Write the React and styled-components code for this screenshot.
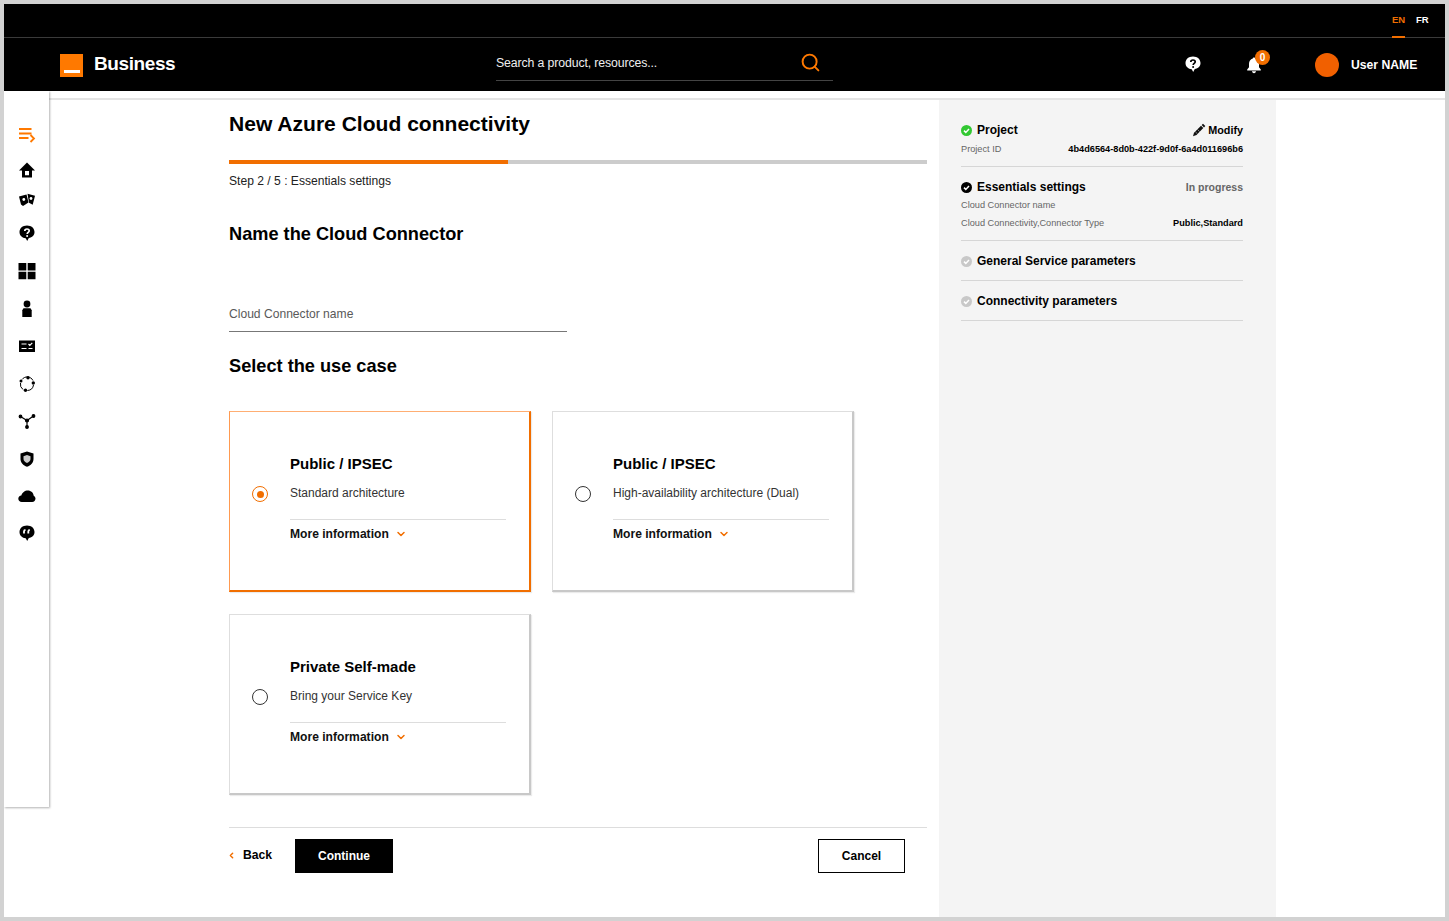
import React from "react";
import styled, { createGlobalStyle } from "styled-components";
import { ChevronDown, ChevronLeft, Search } from "lucide-react";

const orange = "#f16e00";

const GlobalStyle = createGlobalStyle`
  html, body {
    margin: 0;
    padding: 0;
    background: #fff;
  }
  body {
    font-family: "Liberation Sans", Arial, sans-serif;
    color: #000;
  }
  * {
    box-sizing: border-box;
  }
`;

const Frame = styled.div`
  width: 1449px;
  height: 921px;
  border: 4px solid #d2d2d2;
  overflow: hidden;
  background: #fff;
`;

const TopBar = styled.div`
  height: 34px;
  background: #000;
  border-bottom: 1px solid #3a3a3a;
  display: flex;
  justify-content: flex-end;
  gap: 11px;
  padding-right: 17px;
`;

const Lang = styled.span`
  height: 34px;
  padding-top: 10px;
  width: ${(p) => (p.$active ? "13px" : "12px")};
  font-size: 9.5px;
  font-weight: 700;
  color: ${(p) => (p.$active ? orange : "#fff")};
  border-bottom: ${(p) => (p.$active ? `2px solid ${orange}` : "none")};
`;

const Header = styled.header`
  height: 53px;
  background: #000;
  display: flex;
  align-items: center;
  padding-left: 56px;
`;

const LogoSquare = styled.div`
  width: 23px;
  height: 23px;
  background: #ff7900;
  display: flex;
  align-items: flex-end;
  justify-content: center;
  padding-bottom: 4px;
  margin-top: 1px;
  &::after {
    content: "";
    width: 16px;
    height: 3px;
    background: #fff;
  }
`;

const Brand = styled.span`
  margin-left: 11px;
  margin-top: -2px;
  width: 402px;
  color: #fff;
  font-size: 19px;
  font-weight: 700;
  letter-spacing: -0.4px;
`;

const SearchBox = styled.div`
  width: 337px;
  height: 34px;
  margin-top: -1px;
  padding: 0 12px 2px 0;
  border-bottom: 1px solid #444;
  display: flex;
  align-items: center;
  justify-content: space-between;
  color: #eee;
  font-size: 12.3px;
  letter-spacing: -0.12px;
`;

const HeaderIcon = styled.div`
  position: relative;
  display: flex;
  color: #fff;
  margin-left: ${(p) => p.$left}px;
  margin-top: ${(p) => p.$top}px;
`;

const Badge = styled.span`
  position: absolute;
  left: 10px;
  top: -6px;
  width: 15px;
  height: 15px;
  border-radius: 50%;
  background: ${orange};
  color: #fff;
  font-size: 10px;
  font-weight: 700;
  display: flex;
  align-items: center;
  justify-content: center;
`;

const Avatar = styled.div`
  width: 24px;
  height: 24px;
  margin-left: 52px;
  border-radius: 50%;
  background: #f16000;
`;

const UserName = styled.span`
  margin-left: 12px;
  margin-top: 1px;
  color: #fff;
  font-size: 12.2px;
  font-weight: 700;
`;

const Body = styled.div`
  display: flex;
  align-items: flex-start;
  height: 826px;
`;

const Sidebar = styled.nav`
  width: 45px;
  height: 716px;
  flex: none;
  background: #fff;
  box-shadow: 1px 1px 2px rgba(0, 0, 0, 0.3);
  position: relative;
`;

const SideItem = styled.div`
  position: absolute;
  left: 14px;
  top: ${(p) => p.$y - 91 - 9}px;
  width: 18px;
  height: 18px;
  color: ${(p) => (p.$active ? "#ff7900" : "#000")};
`;

const Content = styled.div`
  flex: 1;
  height: 826px;
  margin-top: 7px;
  border-top: 2px solid #e4e4e4;
  display: flex;
  padding-left: 180px;
`;

const Main = styled.main`
  width: 698px;
  flex: none;
`;

const Title = styled.h1`
  margin: 11px 0 0;
  font-size: 21.05px;
  line-height: 25px;
  font-weight: 700;
`;

const Progress = styled.div`
  margin-top: 24px;
  height: 4px;
  background: #ccc;
`;

const ProgressFill = styled.div`
  height: 100%;
  background: ${orange};
`;

const StepText = styled.p`
  margin: 9px 0 0;
  font-size: 12.1px;
  line-height: 16px;
  color: #222;
`;

const SectionTitle = styled.h2`
  margin: ${(p) => p.$top}px 0 0;
  font-size: 18.2px;
  line-height: 22px;
  font-weight: 700;
`;

const NameField = styled.div`
  margin-top: 60px;
  width: 338px;
  height: 27px;
  border-bottom: 1px solid #777;
  font-size: 12.1px;
  line-height: 18px;
  color: #595959;
`;

const CardGrid = styled.div`
  margin-top: 34px;
  display: grid;
  grid-template-columns: 302px 302px;
  grid-template-rows: 181px 181px;
  column-gap: 21px;
  row-gap: 22px;
`;

const Card = styled.label`
  display: grid;
  grid-template-columns: 60px 1fr;
  grid-template-rows: 22px 44px 1fr;
  padding: 41px 23px 0 0;
  background: #fff;
  border-style: solid;
  border-width: 1px 2px 2px 1px;
  border-color: ${(p) =>
    p.$selected
      ? `#ffae73 ${orange} ${orange} #ff9a50`
      : "#dedede #c8c8c8 #c8c8c8 #dedede"};
  box-shadow: 1px 1px 1px rgba(0, 0, 0, 0.08);
`;

const CardTitle = styled.div`
  grid-column: 2;
  font-size: 15px;
  line-height: 22px;
  font-weight: 700;
`;

const Radio = styled.span`
  grid-column: 1;
  grid-row: 2;
  justify-self: center;
  align-self: start;
  margin-top: 11px;
  width: 16px;
  height: 16px;
  border-radius: 50%;
  border: ${(p) => (p.$checked ? `1.5px solid ${orange}` : "1px solid #333")};
  display: flex;
  align-items: center;
  justify-content: center;
  &::after {
    content: "";
    display: ${(p) => (p.$checked ? "block" : "none")};
    width: 7px;
    height: 7px;
    border-radius: 50%;
    background: ${orange};
  }
`;

const CardText = styled.div`
  grid-column: 2;
  grid-row: 2;
  font-size: 12px;
  line-height: 16px;
  padding-top: 10px;
  color: #333;
`;

const MoreLink = styled.div`
  grid-column: 2;
  grid-row: 3;
  border-top: 1px solid #ddd;
  padding-top: 7px;
  height: 30px;
  display: flex;
  align-items: flex-start;
  gap: 6px;
  font-size: 12.1px;
  line-height: 15px;
  font-weight: 700;
  color: #111;
`;

const Footer = styled.div`
  margin-top: 32px;
  border-top: 1px solid #ddd;
  padding-top: 11px;
  display: flex;
  align-items: center;
`;

const BackLink = styled.span`
  display: flex;
  align-items: center;
  gap: 7px;
  font-size: 12.2px;
  font-weight: 700;
  width: 68px;
  margin-left: -2px;
  margin-top: -2px;
`;

const Button = styled.button`
  width: ${(p) => p.$width}px;
  height: 34px;
  margin-left: ${(p) => p.$left || 0}px;
  border: 1px solid #000;
  border-radius: 0;
  background: ${(p) => (p.$dark ? "#000" : "#fff")};
  color: ${(p) => (p.$dark ? "#fff" : "#000")};
  font-family: inherit;
  font-size: 12px;
  font-weight: 700;
`;

const Panel = styled.aside`
  width: 337px;
  margin-left: 12px;
  height: 820px;
  flex: none;
  background: #f4f4f4;
  padding: 20px 33px 0 22px;
`;

const PanelSection = styled.section`
  border-bottom: 1px solid #d6d6d6;
  height: ${(p) => p.$height}px;
  padding-top: ${(p) => p.$top || 0}px;
`;

const PanelRow = styled.div`
  display: flex;
  align-items: center;
  justify-content: space-between;
  height: ${(p) => p.$height || 18}px;
`;

const PanelHeading = styled.div`
  display: flex;
  align-items: center;
  gap: 5px;
  font-size: 12px;
  font-weight: 700;
  color: #000;
`;

const Muted = styled.span`
  font-size: 9.2px;
  color: #666;
`;

const Value = styled.span`
  font-size: 9.2px;
  font-weight: 700;
  color: #000;
`;

const Status = styled.span`
  font-size: 10.5px;
  font-weight: 700;
  color: #666;
`;

const ModifyLink = styled.span`
  display: flex;
  align-items: center;
  gap: 2px;
  font-size: 10.8px;
  font-weight: 700;
`;

const Dot = ({ color }) => (
  <svg width="11" height="11" viewBox="0 0 11 11">
    <circle cx="5.5" cy="5.5" r="5.5" fill={color} />
    <path d="M3 5.6l1.8 1.8L8 4" fill="none" stroke="#fff" strokeWidth="1.5" />
  </svg>
);

const HelpBubble = ({ size = 18, q = "#fff" }) => (
  <svg width={size} height={size} viewBox="0 0 18 18">
    <path d="M9 1.5C4.6 1.5 1.5 4.3 1.5 8c0 3.4 2.7 6 6.2 6.3L9.2 17l1.6-2.9c3.4-.5 5.7-3 5.7-6.1 0-3.7-3.1-6.5-7.5-6.5z" fill="currentColor" />
    <path d="M6.8 6.9c0-1.2 1-1.9 2.2-1.9s2.2.7 2.2 1.8c0 1.6-2 1.6-2 3.1" fill="none" stroke={q} strokeWidth="1.7" />
    <circle cx="9.1" cy="11.9" r="1" fill={q} />
  </svg>
);

const Bell = () => (
  <svg width="18" height="18" viewBox="0 0 18 18" fill="currentColor">
    <path d="M9 1.5c-.7 0-1.2.5-1.2 1.1C5.4 3.2 4 5.300 4 8v3.300L2.200 13.500V14.500h13.600v-1L14 11.300V8c0-2.700-1.400-4.800-3.800-5.400 0-.6-.5-1.100-1.200-1.100z" />
    <path d="M7 15.300h4c0 1.100-.9 1.900-2 1.900s-2-.8-2-1.900z" />
  </svg>
);

const Pencil = () => (
  <svg width="14" height="14" viewBox="0 0 14 14" fill="#111">
    <path d="M11 .8l2.300 2.300-1.300 1.300-2.300-2.300zM9 2.800l2.300 2.300-6.800 6.800L1 13.200l1-3.500z" />
    <path d="M3.400 8.800l1.900 1.900M5.600 6.600l1.900 1.900" stroke="#fff" strokeWidth="0.5" />
  </svg>
);

const sideIcons = [
  {
    y: 135,
    active: true,
    node: (
      <svg viewBox="0 0 18 18" fill="none" stroke="currentColor" strokeWidth="1.8">
        <path d="M1 3h12.500M1 7.500h12.500M1 12h9.500M12.500 9l3.500 3.500-3.500 3.500" />
      </svg>
    ),
  },
  {
    y: 170,
    node: (
      <svg viewBox="0 0 18 18" fill="currentColor">
        <path fillRule="evenodd" d="M9 1.500L1 9.500h3v7h10v-7h3zM7 10h4v4.300H7z" />
      </svg>
    ),
  },
  {
    y: 200,
    node: (
      <svg viewBox="0 0 18 18" fill="currentColor">
        <path d="M1 5.500L8.500 3.500l2 8L5 15 3 13.500z" />
        <path d="M9.500 2.800l7.500 2-2.300 9-3.700-2z" />
        <circle cx="5.800" cy="8.500" r="1.400" fill="#fff" />
        <circle cx="13" cy="7.500" r="1.400" fill="#fff" />
      </svg>
    ),
  },
  { y: 233, node: <HelpBubble /> },
  {
    y: 271,
    node: (
      <svg viewBox="0 0 18 18" fill="currentColor">
        <path d="M.5 1h7.800v7.500H.5zM9.700 1h7.800v7.500H9.700zM.5 9.800h7.800v7.500H.5zM9.700 9.800h7.800v7.500H9.700z" />
      </svg>
    ),
  },
  {
    y: 309,
    node: (
      <svg viewBox="0 0 18 18" fill="currentColor">
        <circle cx="9" cy="4" r="3.400" />
        <path d="M5.500 8.300h7l1.200 2V17H4.300v-6.700z" />
      </svg>
    ),
  },
  {
    y: 346,
    node: (
      <svg viewBox="0 0 18 18">
        <path d="M1 3.500h16v11.500H1z" fill="currentColor" />
        <path d="M3.500 7h5M3.500 11.500h5M10.500 7l1.300 1.300 2.500-2.500M10.500 11.500h4" stroke="#fff" strokeWidth="1.200" fill="none" />
      </svg>
    ),
  },
  {
    y: 384,
    node: (
      <svg viewBox="0 0 18 18" fill="currentColor">
        <path d="M4 4.500a6.500 6.500 0 0 1 11 1M15.500 10a6.500 6.500 0 0 1-6 5.500M5 14.500A6.500 6.500 0 0 1 2.500 8" fill="none" stroke="currentColor" strokeWidth="1" />
        <circle cx="10" cy="2.800" r="1.700" />
        <circle cx="15.300" cy="8" r="1.700" />
        <circle cx="3" cy="6" r="1.500" />
        <circle cx="7.500" cy="15.300" r="1.700" />
      </svg>
    ),
  },
  {
    y: 421,
    node: (
      <svg viewBox="0 0 18 18" fill="currentColor" stroke="currentColor" strokeWidth="1.200">
        <path d="M2.500 4.500L9 8.500l6.500-4.500M9 8.500v6.500" fill="none" />
        <circle cx="2.500" cy="4.500" r="1.300" />
        <circle cx="15.500" cy="4" r="1.300" />
        <circle cx="9" cy="8.500" r="1.500" />
        <circle cx="9" cy="15" r="1.300" />
      </svg>
    ),
  },
  {
    y: 459,
    node: (
      <svg viewBox="0 0 18 18">
        <path d="M9 1.500l6.500 2V9c0 3.800-2.700 6.300-6.500 7.800C5.200 15.300 2.500 12.800 2.500 9V3.500z" fill="currentColor" />
        <path d="M9 5l3.500 1.300V9c0 1.800-1.500 3.200-3.500 4-2-.8-3.500-2.200-3.500-4V6.300z" fill="#ccc" />
      </svg>
    ),
  },
  {
    y: 496,
    node: (
      <svg viewBox="0 0 18 18" fill="currentColor">
        <path d="M3.800 15C1.800 15 .3 13.500.3 11.700c0-1.700 1.300-3 3-3.200C4.100 5.600 6.800 3.500 9.800 3.500c3.300 0 5.700 2.300 5.900 5.200 1 .6 1.800 1.800 1.800 2.900 0 1.900-1.400 3.400-3.300 3.400z" />
      </svg>
    ),
  },
  {
    y: 533,
    node: (
      <svg viewBox="0 0 18 18">
        <path d="M9 1.500C4.600 1.500 1.500 4.300 1.500 8c0 3.400 2.700 6 6.200 6.300L9.200 17l1.600-2.900c3.400-.5 5.700-3 5.700-6.100 0-3.700-3.100-6.500-7.500-6.500z" fill="currentColor" />
        <path d="M6 9.500V7.500c0-1 .5-1.500 1.500-1.700M10.300 9.500V7.500c0-1 .5-1.500 1.500-1.700" fill="none" stroke="#fff" strokeWidth="1.800" />
      </svg>
    ),
  },
];

const cards = [
  { title: "Public / IPSEC", text: "Standard architecture", selected: true },
  { title: "Public / IPSEC", text: "High-availability architecture (Dual)" },
  { title: "Private Self-made", text: "Bring your Service Key" },
];

function App() {
  return (
    <>
      <GlobalStyle />
      <Frame>
        <TopBar>
          <Lang $active>EN</Lang>
          <Lang>FR</Lang>
        </TopBar>
        <Header>
          <LogoSquare />
          <Brand>Business</Brand>
          <SearchBox>
            <span>Search a product, resources...</span>
            <Search size={21} color="#ff7900" strokeWidth={2.2} />
          </SearchBox>
          <HeaderIcon $left={351} $top={-2}>
            <HelpBubble q="#000" />
          </HeaderIcon>
          <HeaderIcon $left={43} $top={0}>
            <Bell />
            <Badge>0</Badge>
          </HeaderIcon>
          <Avatar />
          <UserName>User NAME</UserName>
        </Header>
        <Body>
          <Sidebar>
            {sideIcons.map((icon) => (
              <SideItem key={icon.y} $y={icon.y} $active={icon.active}>
                {icon.node}
              </SideItem>
            ))}
          </Sidebar>
          <Content>
            <Main>
              <Title>New Azure Cloud connectivity</Title>
              <Progress>
                <ProgressFill style={{ width: "40%" }} />
              </Progress>
              <StepText>Step 2 / 5 : Essentials settings</StepText>
              <SectionTitle $top={34}>Name the Cloud Connector</SectionTitle>
              <NameField>Cloud Connector name</NameField>
              <SectionTitle $top={23}>Select the use case</SectionTitle>
              <CardGrid>
                {cards.map((card) => (
                  <Card key={card.text} $selected={card.selected}>
                    <CardTitle>{card.title}</CardTitle>
                    <Radio $checked={card.selected} />
                    <CardText>{card.text}</CardText>
                    <MoreLink>
                      More information
                      <ChevronDown size={12} color={orange} strokeWidth={3} style={{ marginTop: 1 }} />
                    </MoreLink>
                  </Card>
                ))}
              </CardGrid>
              <Footer>
                <BackLink>
                  <ChevronLeft size={9} color={orange} strokeWidth={4} />
                  Back
                </BackLink>
                <Button $dark $width={98}>Continue</Button>
                <Button $width={87} $left={425}>Cancel</Button>
              </Footer>
            </Main>
            <Panel>
              <PanelSection $height={47}>
                <PanelRow $height={20}>
                  <PanelHeading>
                    <Dot color="#32c832" />
                    Project
                  </PanelHeading>
                  <ModifyLink>
                    <Pencil />
                    Modify
                  </ModifyLink>
                </PanelRow>
                <PanelRow>
                  <Muted>Project ID</Muted>
                  <Value>4b4d6564-8d0b-422f-9d0f-6a4d011696b6</Value>
                </PanelRow>
              </PanelSection>
              <PanelSection $height={74} $top={11}>
                <PanelRow>
                  <PanelHeading>
                    <Dot color="#000" />
                    Essentials settings
                  </PanelHeading>
                  <Status>In progress</Status>
                </PanelRow>
                <PanelRow>
                  <Muted>Cloud Connector name</Muted>
                </PanelRow>
                <PanelRow>
                  <Muted>Cloud Connectivity,Connector Type</Muted>
                  <Value>Public,Standard</Value>
                </PanelRow>
              </PanelSection>
              <PanelSection $height={40} $top={11}>
                <PanelRow>
                  <PanelHeading>
                    <Dot color="#c8c8c8" />
                    General Service parameters
                  </PanelHeading>
                </PanelRow>
              </PanelSection>
              <PanelSection $height={40} $top={11}>
                <PanelRow>
                  <PanelHeading>
                    <Dot color="#c8c8c8" />
                    Connectivity parameters
                  </PanelHeading>
                </PanelRow>
              </PanelSection>
            </Panel>
          </Content>
        </Body>
      </Frame>
    </>
  );
}

export default App;
